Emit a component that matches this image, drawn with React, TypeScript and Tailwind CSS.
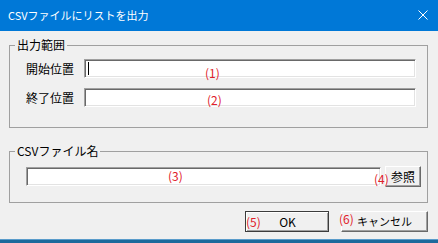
import React from 'react';

const jp = "font-['Noto_Sans_CJK_JP','Noto_Sans',sans-serif]";

const Field = ({ className = '', caret = false }: { className?: string; caret?: boolean }) => (
  <div
    className={`h-[19px] bg-white border border-t-[#a0a0a0] border-l-[#a0a0a0] border-b-white border-r-white shadow-[inset_1px_1px_0_#696969,inset_-1px_-1px_0_#e3e3e3] flex items-center ${className}`}
  >
    {caret && <div className="ml-[3px] w-px h-[13px] bg-black" />}
  </div>
);

const Note = ({ children, className }: { children: React.ReactNode; className: string }) => (
  <span className={`absolute text-[12px] leading-[14px] text-[#e0202a] ${className}`}>{children}</span>
);

export default function App() {
  return (
    <div className={`relative w-[438px] h-[243px] bg-[#f0f0f0] flex flex-col text-[#000] ${jp}`}>
      {/* title bar */}
      <div className="h-[31px] bg-[#0078d7] flex items-center justify-between pl-[8px] pr-[10px] text-white">
        <span className="text-[11px] leading-none">CSVファイルにリストを出力</span>
        <svg width="10" height="10" viewBox="0 0 10 10" className="mb-[1px]">
          <path d="M0.5 0.5L9.5 9.5M9.5 0.5L0.5 9.5" stroke="white" strokeWidth="1" />
        </svg>
      </div>

      <fieldset className="mt-[7px] ml-[9px] mr-[10px] border border-[#a0a0a0] pb-[20px] pr-[11px]">
        <legend className="ml-[5px] px-[2px] text-[12px] leading-[14px]">出力範囲</legend>
        <div className="mt-[7px] flex flex-col gap-[10px]">
          <div className="flex items-center">
            <span className="w-[58px] pl-[16px] box-content shrink-0 text-[12px] leading-none whitespace-nowrap">開始位置</span>
            <Field className="flex-1" caret />
          </div>
          <div className="flex items-center">
            <span className="w-[58px] pl-[16px] box-content shrink-0 text-[12px] leading-none whitespace-nowrap">終了位置</span>
            <Field className="flex-1" />
          </div>
        </div>
      </fieldset>

      <fieldset className="mt-[16px] ml-[9px] mr-[10px] border border-[#a0a0a0] pb-[15px] pl-[16px] pr-[6px]">
        <legend className="ml-[-11px] px-[2px] text-[12px] leading-[14px]">CSVファイル名</legend>
        <div className="mt-[8px] flex items-center gap-[4px]">
          <Field className="flex-1" />
          <button className="w-[36px] h-[21px] bg-[#f0f0f0] border border-t-white border-l-white border-b-[#696969] border-r-[#696969] shadow-[inset_-1px_-1px_0_#a0a0a0] text-[12px] leading-none">
            参照
          </button>
        </div>
      </fieldset>

      <div className="mt-[8px] mr-[10px] flex justify-end gap-[12px]">
        <button className="w-[84px] h-[21px] bg-[#f0f0f0] border border-[#3c3c3c] shadow-[inset_1px_1px_0_#fff,inset_-1px_-1px_0_#a0a0a0] text-[12px] leading-none pl-[1px]">
          OK
        </button>
        <button className="w-[87px] h-[21px] bg-[#f0f0f0] border border-t-white border-l-white border-b-[#696969] border-r-[#696969] shadow-[inset_-1px_-1px_0_#a0a0a0] text-[11px] leading-none">
          キャンセル
        </button>
      </div>

      <div className="mt-auto h-[4px] border-t border-t-[#5a9ccb] bg-[#1d6a9c]" />

      <Note className="left-[205px] top-[66px]">(1)</Note>
      <Note className="left-[207px] top-[93px]">(2)</Note>
      <Note className="left-[168px] top-[169px]">(3)</Note>
      <Note className="left-[374px] top-[172px]">(4)</Note>
      <Note className="left-[246px] top-[215px]">(5)</Note>
      <Note className="left-[339px] top-[212px]">(6)</Note>
    </div>
  );
}
